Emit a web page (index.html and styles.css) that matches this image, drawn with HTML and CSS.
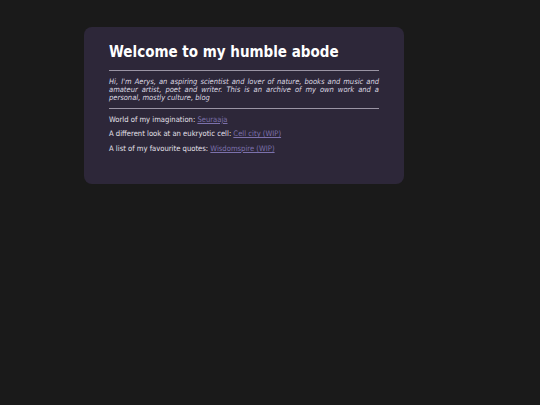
FILE: index.html
```html
<!DOCTYPE html>
<html>
<head>
<meta charset="utf-8">
<link rel="stylesheet" href="styles.css">
</head>
<body>
<main class="card">
  <h1 class="title">Welcome to my humble abode</h1>
  <hr class="rule rule-top">
  <p class="intro">Hi, I'm Aerys, an aspiring scientist and lover of nature, books and music and amateur artist, poet and writer. This is an archive of my own work and a personal, mostly culture, blog</p>
  <hr class="rule rule-bottom">
  <p class="item">World of my imagination: <a class="link" href="#">Seuraaja</a></p>
  <p class="item">A different look at an eukryotic cell: <a class="link" href="#">Cell city (WIP)</a></p>
  <p class="item">A list of my favourite quotes: <a class="link" href="#">Wisdomspire (WIP)</a></p>
</main>
</body>
</html>
```
FILE: styles.css
```css
html, body {
  margin: 0;
  padding: 0;
  background: #1a1a1a;
}
body {
  font-family: "DejaVu Sans Condensed", "DejaVu Sans", Verdana, sans-serif;
  color: #e4e0ea;
  padding: 27px 0 0 84px;
}
.card {
  width: 270px;
  padding: 17px 25px 31px;
  background: #2d2739;
  border-radius: 8px;
}
.title {
  margin: 0;
  font-size: 15px;
  font-weight: bold;
  color: #ffffff;
  line-height: 17px;
}
.rule {
  border: 0;
  height: 1px;
  background: #9a94a4;
}
.rule-top {
  margin: 9px 0 7px;
}
.rule-bottom {
  margin: 6px 0 7px;
}
.intro {
  margin: 0;
  font-size: 7.5px;
  font-style: italic;
  line-height: 8px;
  text-align: justify;
  color: #dcd8e2;
}
.item {
  margin: 6.3px 0 0;
  font-size: 7.6px;
  line-height: 8px;
}
.rule-bottom + .item {
  margin-top: 0;
}
.link {
  color: #7c71ac;
  text-decoration: underline;
}
```
